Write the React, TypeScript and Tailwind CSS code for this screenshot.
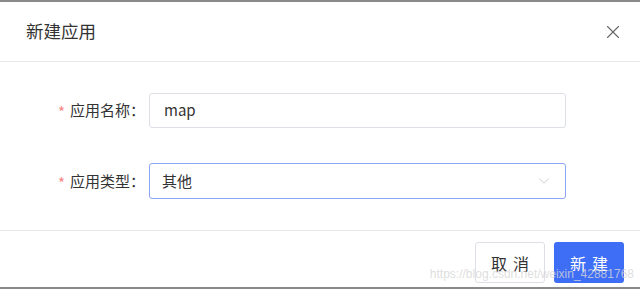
import { ChevronDown, X } from "lucide-react";

const FONT = { fontFamily: '"Microsoft YaHei", "Noto Sans CJK SC", "Liberation Sans", sans-serif' };

function Field({ label, children }: { label: string; children: React.ReactNode }) {
  return (
    <div className="flex items-center">
      <label className="flex w-[149px] shrink-0 items-center justify-end pr-[4px] text-[15px] text-[#333]">
        <span className="mr-[5px] translate-y-[2px] text-[15px] text-[#f78585]">*</span>
        {label}：
      </label>
      {children}
    </div>
  );
}

export default function App() {
  return (
    <div className="relative flex h-[289px] w-[640px] flex-col overflow-hidden bg-white" style={FONT}>
      <div className="h-[2px] shrink-0 bg-[#8a8a8a]" />
      <header className="flex h-[60px] shrink-0 items-center justify-between border-b border-[#e8e8e8] pl-[26px] pr-[16px]">
        <h2 className="text-[17.5px] text-[#333]">新建应用</h2>
        <X className="h-[22px] w-[22px] text-[#666]" strokeWidth={1.2} />
      </header>

      <div className="flex h-[169px] shrink-0 flex-col gap-[35px] border-b border-[#e8e8e8] pt-[31px]">
        <Field label="应用名称">
          <div className="flex h-[35px] w-[417px] items-center rounded-[3px] border border-[#dcdfe6] px-[14px] text-[15px] text-[#333]">
            map
          </div>
        </Field>
        <Field label="应用类型">
          <div className="flex h-[36px] w-[417px] items-center justify-between rounded-[3px] border border-[#8ea4f5] px-[12px] text-[15px] text-[#333]">
            其他
            <ChevronDown className="h-[18px] w-[18px] text-[#c0c4cc]" strokeWidth={1.1} />
          </div>
        </Field>
      </div>

      <footer className="flex flex-1 items-start justify-end gap-[9px] pr-[16px] pt-[11px]">
        <button className="h-[41px] w-[70px] rounded-[3px] border border-[#dcdfe6] bg-white pl-[6px] text-[16px] tracking-[6px] text-[#333]">
          取消
        </button>
        <button className="h-[41px] w-[70px] rounded-[3px] bg-[#3f6ef6] pl-[6px] text-[16px] tracking-[6px] text-white">
          新建
        </button>
      </footer>

      <div className="h-[2px] shrink-0 bg-[#8a8a8a]" />

      <span className="pointer-events-none absolute bottom-[6px] right-[6px] text-[12px] text-[#d6d6d6]/80" style={{ fontFamily: '"Liberation Sans", sans-serif' }}>
        https://blog.csdn.net/weixin_42881768
      </span>
    </div>
  );
}
